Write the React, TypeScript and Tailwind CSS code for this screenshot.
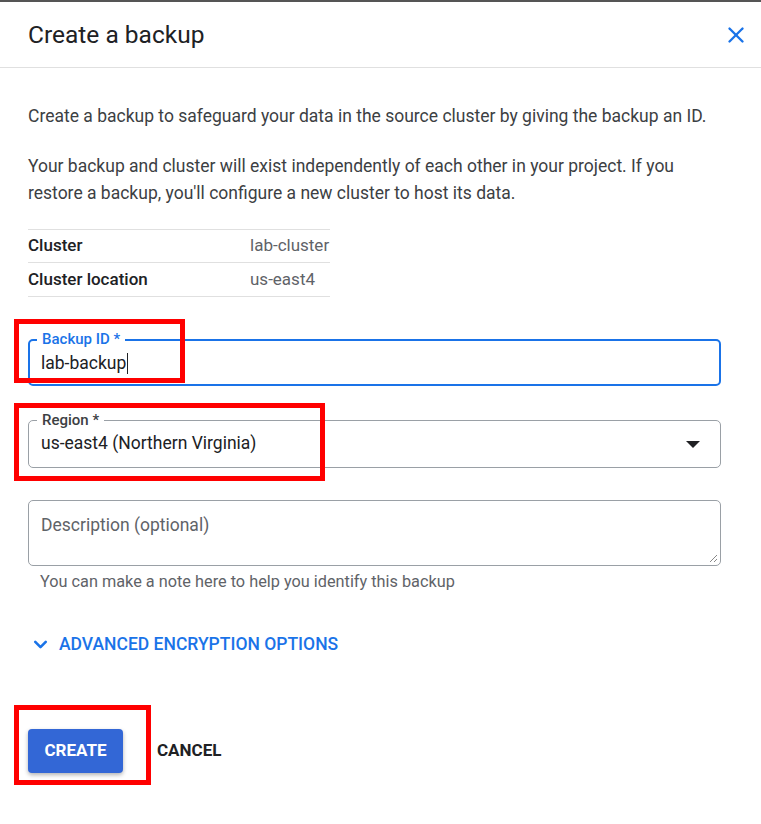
import { X, ChevronDown } from 'lucide-react';

export default function App() {
  return (
    <div className="relative w-[761px] h-[824px] bg-white overflow-hidden font-['Roboto',sans-serif] text-[#202124]">
      <div className="h-[2px] bg-[#555]" />

      <div className="flex items-center justify-between h-[66px] pl-[28px] pr-[12px] border-b border-[#e0e0e0]">
        <h1 className="text-[24.5px] font-normal mt-[2px]">Create a backup</h1>
        <X className="h-[26px] w-[26px] text-[#1a73e8]" strokeWidth={2.2} />
      </div>

      <div className="px-[28px] pt-[35px]">
        <p className="text-[17.5px] leading-[27px] text-[#3c4043]">
          Create a backup to safeguard your data in the source cluster by giving the backup an ID.
        </p>
        <p className="mt-[23px] text-[17.5px] leading-[27px] text-[#3c4043] pr-[20px]">
          Your backup and cluster will exist independently of each other in your project. If you restore a backup, you'll configure a new cluster to host its data.
        </p>

        <div className="mt-[22px] w-[302px] border-t border-[#e0e0e0] text-[17px]">
          <div className="flex h-[33px] items-center border-b border-[#e0e0e0]">
            <span className="w-[222px] font-medium">Cluster</span>
            <span className="text-[#5f6368]">lab-cluster</span>
          </div>
          <div className="flex h-[34px] items-center border-b border-[#e0e0e0]">
            <span className="w-[222px] font-medium">Cluster location</span>
            <span className="text-[#5f6368]">us-east4</span>
          </div>
        </div>

        <div className="relative mt-[42px] mr-[12px] h-[47px] rounded-[5px] border-2 border-[#1a73e8] flex items-center pl-[11px]">
          <span className="absolute -top-[13px] left-[7px] bg-white px-[5px] text-[15px] font-medium text-[#1a73e8]">Backup ID *</span>
          <span className="text-[17.5px] text-[#202124] mt-[2px]">lab-backup</span>
          <span className="w-px h-[21px] bg-[#202124] ml-px mt-[2px]" />
        </div>

        <div className="relative mt-[34px] mr-[12px] h-[48px] rounded-[5px] border border-[#9aa0a6] flex items-center justify-between pl-[12px] pr-[20px]">
          <span className="absolute -top-[12px] left-[8px] bg-white px-[5px] text-[15px] font-medium text-[#3c4043]">Region *</span>
          <span className="text-[17.5px] text-[#202124] mt-[-2px]">us-east4 (Northern Virginia)</span>
          <span className="w-0 h-0 border-l-[7px] border-r-[7px] border-t-[7px] border-l-transparent border-r-transparent border-t-[#202124]" />
        </div>

        <div className="relative mt-[32px] mr-[12px] h-[66px] rounded-[5px] border border-[#9aa0a6] pl-[12px] pt-[11px]">
          <span className="text-[17.5px] text-[#5f6368]">Description (optional)</span>
          <svg className="absolute right-[2px] bottom-[2px]" width="10" height="10" viewBox="0 0 10 10">
            <path d="M9 2 L2 9 M9 6 L6 9" stroke="#888" strokeWidth="1" />
          </svg>
        </div>
        <p className="mt-[4px] pl-[12px] text-[16.3px] text-[#5f6368]">You can make a note here to help you identify this backup</p>

        <div className="mt-[37px] flex items-center gap-[8px] text-[#1a73e8]">
          <ChevronDown className="h-[21px] w-[21px] ml-[2px]" strokeWidth={3} />
          <span className="text-[17.5px] font-medium uppercase">Advanced encryption options</span>
        </div>

        <div className="mt-[71px] flex items-center gap-[34px]">
          <button className="h-[44px] w-[95px] rounded-[4px] bg-[#3367d6] text-white text-[17px] font-bold shadow-[0_2px_4px_rgba(0,0,0,0.3)]">CREATE</button>
          <span className="text-[17px] font-bold text-[#202124]">CANCEL</span>
        </div>
      </div>

      <div className="absolute left-[14px] top-[319px] w-[171px] h-[64px] border-[5px] border-[#ff0000]" />
      <div className="absolute left-[14px] top-[403px] w-[311px] h-[78px] border-[5px] border-[#ff0000]" />
      <div className="absolute left-[14px] top-[705px] w-[137px] h-[80px] border-[5px] border-[#ff0000]" />
    </div>
  );
}
